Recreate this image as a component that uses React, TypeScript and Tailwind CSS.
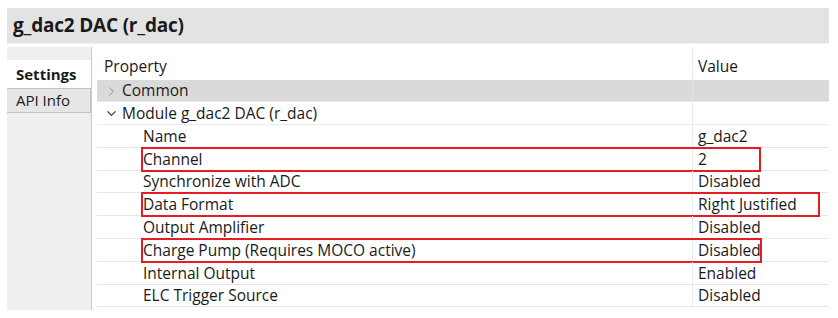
import { ChevronRight, ChevronDown } from "lucide-react";

const rows = [
  { name: "Name", value: "g_dac2" },
  { name: "Channel", value: "2" },
  { name: "Synchronize with ADC", value: "Disabled" },
  { name: "Data Format", value: "Right Justified" },
  { name: "Output Amplifier", value: "Disabled" },
  { name: "Charge Pump (Requires MOCO active)", value: "Disabled" },
  { name: "Internal Output", value: "Enabled" },
  { name: "ELC Trigger Source", value: "Disabled" },
];

// red annotation boxes: row index -> right edge of box (relative to table)
const marks: Record<number, number> = { 1: 664, 3: 723, 5: 665 };

export default function App() {
  return (
    <div
      className="w-[838px] h-[318px] bg-white text-[#1a1a1a] overflow-hidden pt-[8px] px-[7px]"
      style={{ fontFamily: '"Open Sans", "Noto Sans", sans-serif' }}
    >
      <div className="w-[822px] h-[36px] bg-[#e3e3e3] border-b border-[#f2f2f2] flex items-center pl-[6px]">
        <span className="text-[19px] font-bold tracking-[-0.2px]">g_dac2 DAC (r_dac)</span>
      </div>

      <div className="flex mt-[3px] w-[822px]">
        <div className="w-[85px] h-[263px] bg-[#efefef] border-r border-[#c8c8c8] flex flex-col">
          <div className="h-[13px]" />
          <div className="h-[28px] bg-white flex items-center pl-[9px] text-[15px] font-bold">Settings</div>
          <div className="h-[25px] bg-[#e6e6e6] border border-[#c4c4c4] border-l-0 flex items-center pl-[9px] text-[15px]">
            API Info
          </div>
        </div>

        <div className="ml-[5px] w-[732px] text-[15.5px] relative">
          <div className="h-[33px] flex items-center">
            <div className="w-[595px] pl-[7px] pt-[6px]">Property</div>
            <div className="flex-1 h-full border-l border-[#ececec] pl-[5px] pt-[6px] flex items-center">Value</div>
          </div>

          <div className="h-[22px] flex bg-[#dadada] border-b border-[#e8e8e8]">
            <div className="w-[595px] flex items-center pl-[7px] gap-[3px] pt-[1px]">
              <ChevronRight size={15} strokeWidth={1.5} className="text-[#8a8a8a]" />
              <span>Common</span>
            </div>
            <div className="flex-1 border-l border-[#e4e4e4]" />
          </div>

          <div className="h-[23px] flex border-b border-[#ececec]">
            <div className="w-[595px] flex items-center pl-[7px] gap-[3px] pt-[1px]">
              <ChevronDown size={15} strokeWidth={1.8} className="text-[#333]" />
              <span>Module g_dac2 DAC (r_dac)</span>
            </div>
            <div className="flex-1 border-l border-[#ececec]" />
          </div>

          {rows.map((r, i) => (
            <div key={r.name} className="h-[22.8px] flex border-b border-[#e6e6e6] relative">
              <div className="w-[595px] flex items-center pl-[46px] pt-[1px]">{r.name}</div>
              <div className="flex-1 border-l border-[#ececec] flex items-center pl-[5px] pt-[1px]">{r.value}</div>
              {marks[i] !== undefined && (
                <div
                  className="absolute left-[44px] top-[-1px] h-[25px] border-2 border-[#e31c25] pointer-events-none"
                  style={{ width: marks[i] - 44 }}
                />
              )}
            </div>
          ))}
        </div>
      </div>
    </div>
  );
}
